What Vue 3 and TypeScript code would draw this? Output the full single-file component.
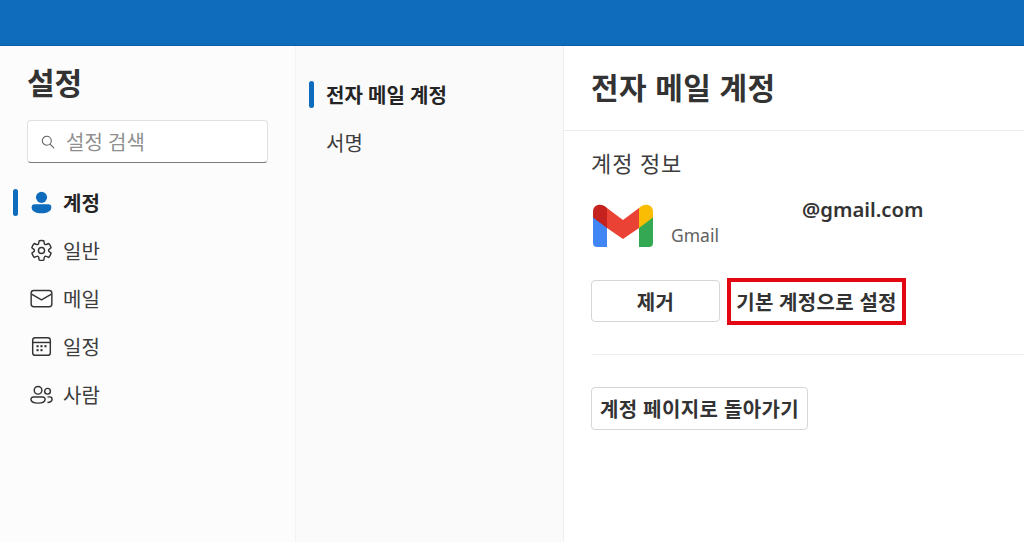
<script setup lang="ts">
type NavItem = { id: string; label: string; active?: boolean }

const navItems: NavItem[] = [
  { id: 'account', label: '계정', active: true },
  { id: 'general', label: '일반' },
  { id: 'mail', label: '메일' },
  { id: 'calendar', label: '일정' },
  { id: 'people', label: '사람' },
]
</script>

<template>
  <div class="page">
    <header class="topbar"></header>
    <div class="body">
      <!-- settings nav -->
      <aside class="nav">
        <h1 class="nav__title">설정</h1>
        <div class="search">
          <svg class="search__icon" viewBox="0 0 16 16" fill="none" stroke="#616161" stroke-width="1.1">
            <circle cx="6.8" cy="6.8" r="4.5" />
            <path d="M10.1 10.1l3.700 3.700" stroke-linecap="round" />
          </svg>
          <span class="search__text">설정 검색</span>
        </div>
        <ul class="nav__list">
          <li v-for="item in navItems" :key="item.id" class="nav__item" :class="{ 'is-active': item.active }">
            <span class="nav__bar"></span>
            <svg v-if="item.id === 'account'" class="nav__icon" viewBox="0 0 24 24" fill="#0f6cbd">
              <circle cx="12" cy="6.600" r="5.800" />
              <path d="M5 13.800h14a3.300 3.300 0 0 1 3.300 3.300c0 4-4.400 6.100-10.300 6.100S1.700 21.100 1.700 17.100A3.300 3.300 0 0 1 5 13.800z" />
            </svg>
            <svg v-else-if="item.id === 'general'" class="nav__icon" viewBox="0 0 24 24" fill="none" stroke="#333" stroke-width="1.5" stroke-linejoin="round">
              <path d="M9.600 1.900a10 10 0 0 1 4.800 0l.5 2.700a1.500 1.500 0 0 0 2.100 1.100l2.500-1a10 10 0 0 1 2.500 4.400l-2.100 1.700a1.500 1.500 0 0 0 0 2.300l2.100 1.700a10 10 0 0 1-2.500 4.400l-2.500-1a1.500 1.500 0 0 0-2.100 1.100l-.5 2.700a10 10 0 0 1-4.800 0l-.5-2.700a1.500 1.500 0 0 0-2.100-1.100l-2.500 1a10 10 0 0 1-2.500-4.400l2.100-1.700a1.500 1.500 0 0 0 0-2.300L1.900 9.100a10 10 0 0 1 2.500-4.400l2.500 1a1.500 1.500 0 0 0 2.100-1.100z" />
              <circle cx="12" cy="12" r="3.200" />
            </svg>
            <svg v-else-if="item.id === 'mail'" class="nav__icon" viewBox="0 0 24 24" fill="none" stroke="#333" stroke-width="1.5" stroke-linejoin="round">
              <rect x="1.200" y="3.600" width="21.600" height="17" rx="2.800" />
              <path d="M1.600 7.400L12 13.400l10.400-6" />
            </svg>
            <svg v-else-if="item.id === 'calendar'" class="nav__icon" viewBox="0 0 24 24" fill="none" stroke="#333" stroke-width="1.5">
              <rect x="2.800" y="2.800" width="18.400" height="18.400" rx="2.800" />
              <path d="M2.800 7.800h18.400" />
              <g fill="#333" stroke="none">
                <rect x="6.800" y="10.600" width="2.200" height="2.200" />
                <rect x="10.900" y="10.600" width="2.200" height="2.200" />
                <rect x="15" y="10.600" width="2.200" height="2.200" />
                <rect x="6.800" y="14.700" width="2.200" height="2.200" />
                <rect x="10.900" y="14.700" width="2.200" height="2.200" />
              </g>
            </svg>
            <svg v-else class="nav__icon" viewBox="0 0 24 24" fill="none" stroke="#333" stroke-width="1.5">
              <circle cx="8.400" cy="7.600" r="4" />
              <path d="M3.400 14.600h10a2.400 2.400 0 0 1 2.400 2.400c0 2.600-3 4-7.400 4S1 19.600 1 17a2.400 2.400 0 0 1 2.400-2.400z" />
              <circle cx="18.300" cy="8.600" r="3" />
              <path d="M18.200 20.400c2.900-.2 4.800-1.500 4.800-3.500 0-1.400-1-2.400-2.200-2.400h-2.600" />
            </svg>
            <span class="nav__label">{{ item.label }}</span>
          </li>
        </ul>
      </aside>

      <!-- sub nav -->
      <nav class="sub">
        <div class="sub__item is-active"><span class="sub__bar"></span>전자 메일 계정</div>
        <div class="sub__item"><span class="sub__bar sub__bar--off"></span>서명</div>
      </nav>

      <!-- content -->
      <main class="main">
        <h2 class="main__title">전자 메일 계정</h2>
        <section class="account">
          <h3 class="account__heading">계정 정보</h3>
          <div class="account__row">
            <svg class="gmail" viewBox="0 0 60 44">
              <path d="M0 8v31a4 4 0 0 0 4 4h10V22z" fill="#4285f4" />
              <path d="M46 43h10a4 4 0 0 0 4-4V8L46 22z" fill="#34a853" />
              <path d="M46 4v20l14-10.500V7.500C60 1 52 -2 46 4z" fill="#fbbc04" />
              <path d="M14 24V4l16 12L46 4v20L30 35z" fill="#ea4335" />
              <path d="M0 7.500v6L14 24V4C8 -2 0 1 0 7.500z" fill="#c5221f" />
            </svg>
            <div class="account__type">Gmail</div>
            <div class="account__mail">@gmail.com</div>
          </div>
          <div class="account__actions">
            <button class="btn btn--remove">제거</button>
            <button class="btn btn--default">기본 계정으로 설정</button>
          </div>
          <hr class="account__rule" />
          <button class="btn btn--back">계정 페이지로 돌아가기</button>
        </section>
      </main>
    </div>
  </div>
</template>

<style>
html,
body {
  margin: 0;
  overflow: hidden;
}
</style>

<style scoped>
.page {
  width: 1024px;
  height: 542px;
  display: flex;
  flex-direction: column;
  overflow: hidden;
  background: #fff;
  color: #242424;
  font-family: 'Noto Sans', 'Noto Sans CJK KR', sans-serif;
}
.topbar {
  height: 46px;
  flex: none;
  background: #0f6cbd;
  border-bottom: 1px solid #0c5ea6;
  box-sizing: border-box;
}
.body {
  flex: 1;
  display: flex;
  min-height: 0;
}

/* settings nav */
.nav {
  width: 296px;
  flex: none;
  box-sizing: border-box;
  padding-top: 16px;
  background: #fcfcfd;
  border-right: 1px solid #f3f3f3;
}
.nav__title {
  margin: 0 0 17px 27px;
  font-size: 30px;
  line-height: 41px;
  font-weight: 700;
  color: #333;
}
.search {
  margin-left: 27px;
  width: 241px;
  height: 43px;
  box-sizing: border-box;
  display: flex;
  align-items: center;
  gap: 10px;
  padding-left: 12px;
  background: #fff;
  border: 1px solid #e0e0e0;
  border-bottom-color: #7a7a7a;
  border-radius: 4px;
}
.search__icon {
  width: 16px;
  height: 16px;
}
.search__text {
  font-size: 20px;
  color: #8f8f8f;
}
.nav__list {
  list-style: none;
  margin: 15px 0 0;
  padding: 0;
}
.nav__item {
  height: 48px;
  display: flex;
  align-items: center;
  padding-left: 13px;
}
.nav__bar {
  width: 5px;
  height: 27px;
  border-radius: 3px;
  margin-right: 12px;
}
.is-active > .nav__bar {
  background: #0f6cbd;
}
.nav__icon {
  width: 23px;
  height: 23px;
  margin-right: 10px;
}
.nav__label {
  font-size: 20px;
  color: #3d3d3d;
}
.is-active > .nav__label {
  font-weight: 700;
  color: #242424;
}

/* sub nav */
.sub {
  width: 268px;
  flex: none;
  box-sizing: border-box;
  padding-top: 24px;
  background: #fafafb;
  border-right: 1px solid #efefef;
}
.sub__item {
  height: 48px;
  display: flex;
  align-items: center;
  padding-left: 13px;
  font-size: 20px;
  color: #3d3d3d;
}
.sub__item.is-active {
  font-weight: 700;
  color: #242424;
}
.sub__bar {
  width: 5px;
  height: 27px;
  margin-right: 12px;
  border-radius: 3px;
  background: #0f6cbd;
}
.sub__bar--off {
  background: transparent;
}

/* content */
.main {
  flex: 1;
  min-width: 0;
}
.main__title {
  margin: 0;
  height: 85px;
  box-sizing: border-box;
  padding: 20px 0 0 27px;
  font-size: 30px;
  line-height: 44px;
  font-weight: 700;
  color: #333;
  letter-spacing: 0.4px;
  border-bottom: 1px solid #ececec;
}
.account {
  padding: 16px 0 0 27px;
}
.account__heading {
  margin: 0;
  font-size: 22px;
  line-height: 32px;
  font-weight: 400;
  color: #3d3d3d;
  letter-spacing: 0.9px;
}
.account__row {
  display: flex;
  align-items: flex-start;
  margin-top: 15px;
  height: 70px;
}
.gmail {
  width: 60px;
  height: 44px;
  margin: 10px 0 0 2px;
  flex: none;
}
.account__type {
  width: 131px;
  margin: 29px 0 0 18px;
  font-size: 17.500px;
  line-height: 24px;
  color: #616161;
}
.account__mail {
  font-size: 20.300px;
  line-height: 28px;
  margin-top: 1px;
  font-weight: 600;
  color: #333;
}
.account__actions {
  display: flex;
  gap: 7px;
  margin-top: 16px;
}
.btn {
  box-sizing: border-box;
  font: inherit;
  font-size: 20px;
  font-weight: 700;
  color: #333;
  background: #fff;
  border: 1px solid #d6d6d6;
  border-radius: 4px;
  padding: 0;
  white-space: nowrap;
  letter-spacing: 0.3px;
}
.btn--remove {
  width: 129px;
  height: 42px;
}
.btn--default {
  width: 179px;
  height: 47px;
  margin-top: -2px;
  border: 4px solid #e30613;
  border-radius: 0;
}
.account__rule {
  margin: 29px 0 0 0;
  border: 0;
  border-top: 1px solid #f0f0f0;
}
.btn--back {
  display: block;
  width: 217px;
  height: 43px;
  margin-top: 32px;
  letter-spacing: 0.4px;
}
</style>
